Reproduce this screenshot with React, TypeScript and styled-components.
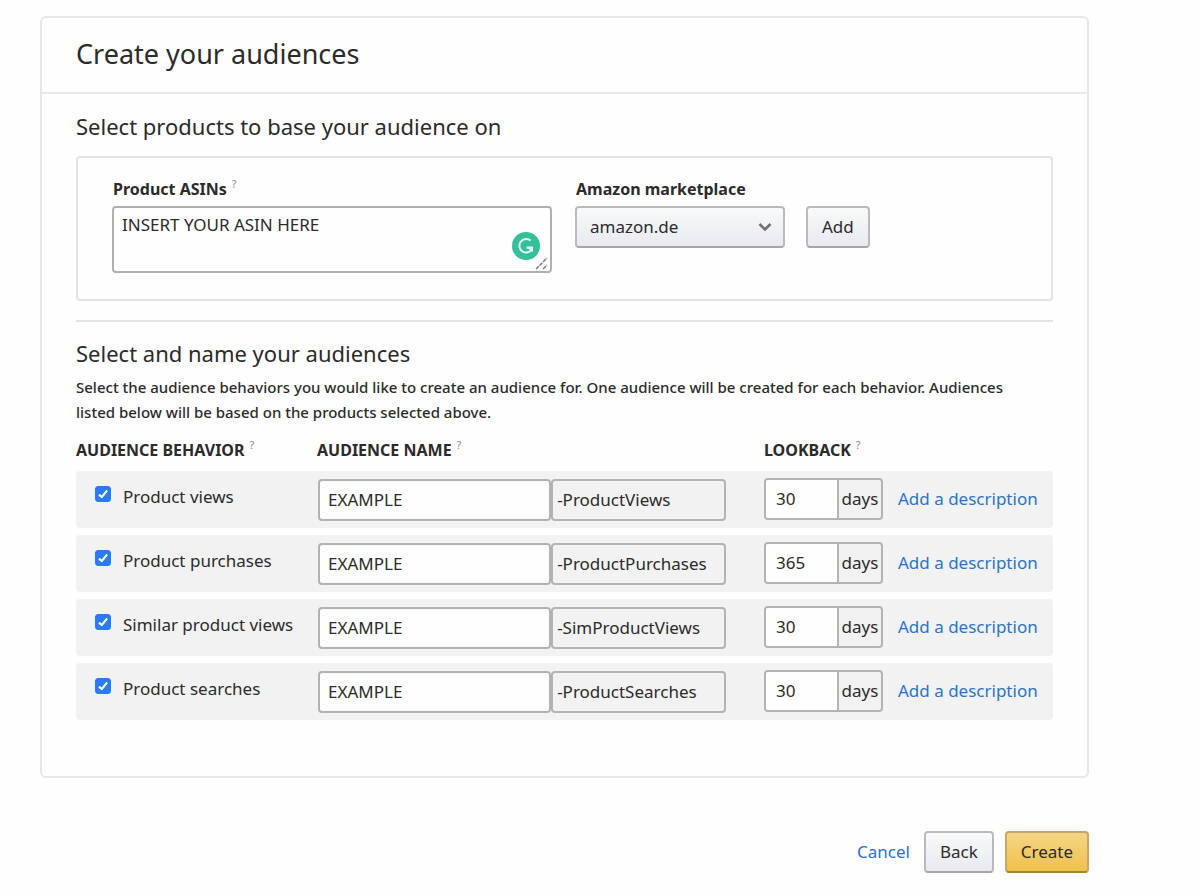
import React, { useId, useState } from "react";
import styled, { createGlobalStyle, css } from "styled-components";

const GlobalStyle = createGlobalStyle`
  *, *::before, *::after { box-sizing: border-box; }
  body {
    margin: 0;
    background: #fefefe;
    color: #2b2b2b;
    font-family: "Noto Sans", "Open Sans", sans-serif;
    font-size: 17px;
    line-height: 24px;
  }
  input, button, select, textarea { font: inherit; color: inherit; }
`;

const Page = styled.main`
  padding: 16px 111px 16px 40px;
`;

const Card = styled.section`
  border: 2px solid #e7e7e7;
  border-radius: 6px;
  background: #fefefe;
`;

const CardHeader = styled.header`
  padding: 17px 34px 19px;
  border-bottom: 2px solid #e9e9e9;
`;

const Title = styled.h1`
  margin: 0;
  font-size: 27px;
  line-height: 38px;
  font-weight: 400;
`;

const CardBody = styled.div`
  padding: 16px 34px 49px;
`;

const SectionTitle = styled.h2`
  margin: 0;
  font-size: 22px;
  line-height: 32px;
  font-weight: 400;
`;

const ProductBox = styled.div`
  display: flex;
  align-items: flex-start;
  margin-top: 14px;
  padding: 19px 34px 26px;
  border: 2px solid #e4e4e4;
  border-radius: 4px;
`;

const AsinField = styled.div`
  flex: 0 1 440px;
  margin-right: 23px;
`;

const MarketField = styled.div`
  flex: 0 0 210px;
  margin-right: 21px;
`;

const FieldHead = styled.div`
  display: flex;
  margin-bottom: 5px;
  padding-left: 1px;
`;

const FieldLabel = styled.label`
  font-size: 16px;
  font-weight: 700;
`;

const HelpMark = styled.sup`
  margin-left: 5px;
  color: #8a8a8a;
  font-size: 11px;
  line-height: 14px;
  font-weight: 400;
  vertical-align: top;
`;

const AreaWrap = styled.div`
  position: relative;
`;

const Area = styled.textarea`
  display: block;
  width: 100%;
  height: 67px;
  padding: 5px 8px;
  border: 2px solid #b0b0b0;
  border-radius: 4px;
  background: #fefefe;
  resize: none;
`;

const CheckerBadge = styled.svg`
  position: absolute;
  right: 12px;
  bottom: 13px;
  width: 28px;
  height: 28px;
`;

const Grip = styled.svg`
  position: absolute;
  right: 3px;
  bottom: 3px;
  width: 14px;
  height: 14px;
`;

const raised = css`
  height: 42px;
  border: 2px solid #b9bbbf;
  border-bottom-color: #a4a6aa;
  border-radius: 4px;
  background: linear-gradient(#f8f9fa, #e8eaee);
`;

const SelectWrap = styled.div`
  position: relative;
`;

const Select = styled.select`
  ${raised}
  display: block;
  width: 100%;
  padding: 0 13px;
  appearance: none;
`;

const Chevron = styled.svg`
  position: absolute;
  right: 12px;
  top: 15px;
  width: 16px;
  height: 12px;
  pointer-events: none;
`;

const Button = styled.button<{ $primary?: boolean }>`
  ${raised}
  padding: 0 14px;
  ${(p) =>
    p.$primary &&
    css`
      border-color: #c3a866;
      border-bottom-color: #a08437;
      background: linear-gradient(#f5d585, #f0c14b);
    `}
`;

const AddSlot = styled.div`
  padding-top: 29px;
`;

const Divider = styled.hr`
  margin: 19px 0 15px;
  border: 0;
  border-top: 2px solid #e4e4e4;
`;

const Intro = styled.p`
  margin: 6px 0 0;
  padding-right: 24px;
  font-size: 15px;
  font-weight: 500;
  line-height: 25px;
`;

const Table = styled.table`
  width: 100%;
  margin-top: 6px;
  border-spacing: 0 7px;
  table-layout: fixed;
`;

const HeadCell = styled.th<{ $width?: number }>`
  width: ${(p) => (p.$width ? `${p.$width}px` : "auto")};
  padding: 0 0 2px;
  text-align: left;
  font-size: 16px;
  font-weight: 700;
  text-transform: uppercase;
  white-space: nowrap;
`;

const Cell = styled.td<{ $lift?: number }>`
  height: 57px;
  padding: 0 0 ${(p) => p.$lift ?? 0}px;
  background: #f2f2f2;
  &:first-child { border-radius: 4px 0 0 4px; }
  &:last-child { border-radius: 0 4px 4px 0; }
`;

const CheckLabel = styled.label`
  display: flex;
  align-items: flex-start;
  gap: 12px;
  padding-left: 19px;
  white-space: nowrap;
`;

const Check = styled.input`
  appearance: none;
  flex: none;
  width: 16px;
  height: 16px;
  margin: 1px 0 0;
  border: 1px solid #8a8a8a;
  border-radius: 3px;
  background: #fff;
  &:checked {
    border-color: #2b7bf6;
    background: #2b7bf6;
  }
`;

const CheckBox = styled.span`
  display: inline-flex;
  position: relative;
`;

const Tick = styled.svg`
  position: absolute;
  left: 0;
  top: 1px;
  width: 16px;
  height: 16px;
  pointer-events: none;
`;

const NameGroup = styled.div`
  display: grid;
  grid-template-columns: 4fr 3fr;
  padding: 0 38px 0 1px;
`;

const box = css`
  height: 42px;
  border: 2px solid #b3b3b3;
  border-radius: 4px;
`;

const NameInput = styled.input`
  ${box}
  min-width: 0;
  padding: 0 8px;
  background: #fefefe;
`;

const Suffix = styled.span`
  ${box}
  padding: 0 4px;
  line-height: 38px;
  white-space: nowrap;
`;

const DaysGroup = styled.label`
  ${box}
  display: flex;
  width: 119px;
  overflow: hidden;
`;

const DaysInput = styled.input`
  width: 71px;
  padding: 0 10px;
  border: 0;
  background: #fefefe;
`;

const DaysUnit = styled.span`
  flex: 1;
  border-left: 2px solid #b3b3b3;
  line-height: 38px;
  text-align: center;
`;

const Link = styled.a`
  color: #2b74c8;
  text-decoration: none;
  white-space: nowrap;
`;

const Footer = styled.footer`
  display: flex;
  align-items: center;
  justify-content: flex-end;
  margin-top: 53px;
`;

const FooterActions = styled.div`
  display: flex;
  gap: 11px;
  margin-left: 14px;
`;

type Behavior = { label: string; suffix: string; days: string };

const behaviors: Behavior[] = [
  { label: "Product views", suffix: "-ProductViews", days: "30" },
  { label: "Product purchases", suffix: "-ProductPurchases", days: "365" },
  { label: "Similar product views", suffix: "-SimProductViews", days: "30" },
  { label: "Product searches", suffix: "-ProductSearches", days: "30" },
];

function BehaviorRow({ label, suffix, days }: Behavior) {
  const [checked, setChecked] = useState(true);
  return (
    <tr>
      <Cell $lift={6}>
        <CheckLabel>
          <CheckBox>
            <Check
              type="checkbox"
              checked={checked}
              onChange={(e) => setChecked(e.target.checked)}
            />
            {checked && (
              <Tick viewBox="0 0 16 16" aria-hidden="true">
                <path d="M4 8.6 6.8 11 12 4.6" fill="none" stroke="#fff" strokeWidth="2.2" />
              </Tick>
            )}
          </CheckBox>
          {label}
        </CheckLabel>
      </Cell>
      <Cell>
        <NameGroup>
          <NameInput type="text" defaultValue="EXAMPLE" aria-label={`${label} audience name`} />
          <Suffix>{suffix}</Suffix>
        </NameGroup>
      </Cell>
      <Cell $lift={2}>
        <DaysGroup>
          <DaysInput type="text" inputMode="numeric" defaultValue={days} />
          <DaysUnit>days</DaysUnit>
        </DaysGroup>
      </Cell>
      <Cell $lift={2}>
        <Link href="#description">Add a description</Link>
      </Cell>
    </tr>
  );
}

export default function App() {
  const asinId = useId();
  const marketId = useId();
  return (
    <>
      <GlobalStyle />
      <Page>
        <Card>
          <CardHeader>
            <Title>Create your audiences</Title>
          </CardHeader>
          <CardBody>
            <SectionTitle>Select products to base your audience on</SectionTitle>
            <ProductBox>
              <AsinField>
                <FieldHead>
                  <FieldLabel htmlFor={asinId}>Product ASINs</FieldLabel>
                  <HelpMark>?</HelpMark>
                </FieldHead>
                <AreaWrap>
                  <Area id={asinId} defaultValue="INSERT YOUR ASIN HERE" spellCheck={false} />
                  <CheckerBadge viewBox="0 0 28 28" aria-hidden="true">
                    <circle cx="14" cy="14" r="14" fill="#35c09a" />
                    <path
                      d="M18.6 8.6A6.8 6.8 0 1 0 20 17.2"
                      fill="none"
                      stroke="#e6f8f3"
                      strokeWidth="2"
                    />
                    <path d="M14.5 14.6H21V20.4L19.2 18.2 14.5 16.4Z" fill="#e6f8f3" />
                  </CheckerBadge>
                  <Grip viewBox="0 0 14 14" aria-hidden="true">
                    <path d="M1 13 12 2M8 13 12 9" fill="none" stroke="#777" strokeWidth="1.4" strokeDasharray="4 1" />
                  </Grip>
                </AreaWrap>
              </AsinField>
              <MarketField>
                <FieldHead>
                  <FieldLabel htmlFor={marketId}>Amazon marketplace</FieldLabel>
                </FieldHead>
                <SelectWrap>
                  <Select id={marketId} defaultValue="amazon.de">
                    <option>amazon.de</option>
                  </Select>
                  <Chevron viewBox="0 0 16 12" aria-hidden="true">
                    <path d="M2.5 3 8 8.5 13.5 3" fill="none" stroke="#707070" strokeWidth="2.6" />
                  </Chevron>
                </SelectWrap>
              </MarketField>
              <AddSlot>
                <Button type="button">Add</Button>
              </AddSlot>
            </ProductBox>
            <Divider />
            <SectionTitle>Select and name your audiences</SectionTitle>
            <Intro>
              Select the audience behaviors you would like to create an audience for. One audience
              will be created for each behavior. Audiences listed below will be based on the
              products selected above.
            </Intro>
            <Table>
              <thead>
                <tr>
                  <HeadCell $width={241}>
                    Audience behavior<HelpMark>?</HelpMark>
                  </HeadCell>
                  <HeadCell>
                    Audience name<HelpMark>?</HelpMark>
                  </HeadCell>
                  <HeadCell $width={134}>
                    Lookback<HelpMark>?</HelpMark>
                  </HeadCell>
                  <HeadCell $width={155} aria-label="Description" />
                </tr>
              </thead>
              <tbody>
                {behaviors.map((b) => (
                  <BehaviorRow key={b.label} {...b} />
                ))}
              </tbody>
            </Table>
          </CardBody>
        </Card>
        <Footer>
          <Link href="#cancel">Cancel</Link>
          <FooterActions>
            <Button type="button">Back</Button>
            <Button type="button" $primary>
              Create
            </Button>
          </FooterActions>
        </Footer>
      </Page>
    </>
  );
}
